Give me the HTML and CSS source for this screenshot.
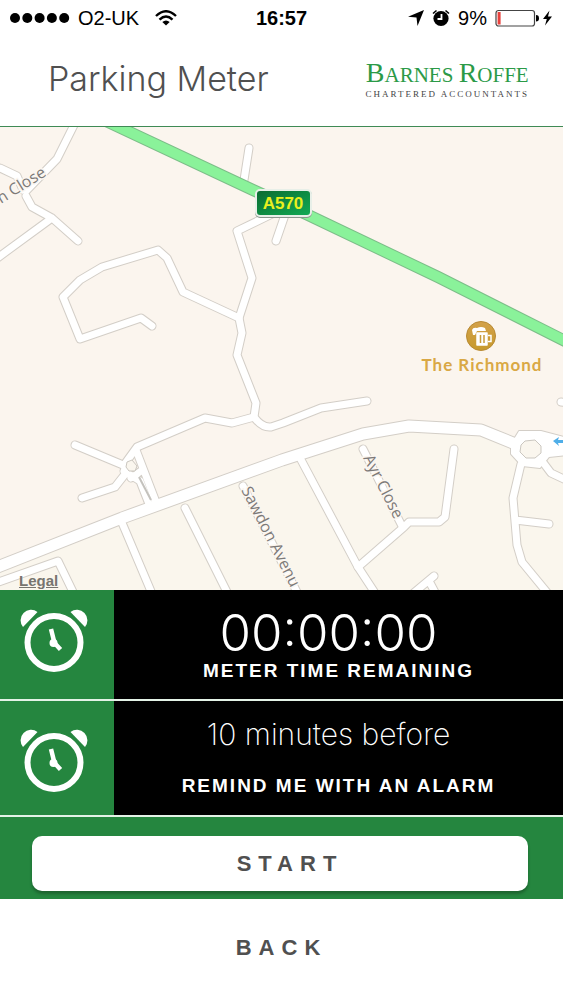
FILE: index.html
```html
<!DOCTYPE html>
<html lang="en">
<head>
    <meta charset="UTF-8">
    <meta name="viewport" content="width=device-width, initial-scale=1.0">
    <title>Parking Meter</title>
    <link rel="stylesheet" href="styles.css">
</head>
<body>

    <div class="status-bar">
        <div class="status-left">
            <svg class="signal" width="60" height="12" viewBox="0 0 60 12">
                <circle cx="5" cy="6" r="5"/>
                <circle cx="17.3" cy="6" r="5"/>
                <circle cx="29.6" cy="6" r="5"/>
                <circle cx="41.9" cy="6" r="5"/>
                <circle cx="54.2" cy="6" r="5"/>
            </svg>
            <span>O2-UK</span>
            <svg class="wifi" width="22" height="16" viewBox="0 0 22 16">
                <path d="M1 6 Q11 -3.5 21 6" fill="none" stroke="#000" stroke-width="2.4"/>
                <path d="M4.5 9.6 Q11 3.4 17.5 9.6" fill="none" stroke="#000" stroke-width="2.4"/>
                <path d="M7.3 12 Q11 8.8 14.7 12 L11 15.6 Z"/>
            </svg>
        </div>
        <strong class="clock">16:57</strong>
        <div class="status-right">
            <svg width="16" height="16" viewBox="0 0 16 16">
                <path d="M16 0 L9.5 16 L8.5 7.5 L0 6.8 Z"/>
            </svg>
            <svg width="18" height="18" viewBox="0 0 18 18">
                <circle cx="9" cy="9.5" r="7.6"/>
                <path d="M1 4.5 L4.5 1.5 M17 4.5 L13.5 1.5" stroke="#000" stroke-width="1.6"/>
                <path d="M9.5 5 V10 H5.5" fill="none" stroke="#fff" stroke-width="1.8"/>
            </svg>
            <span>9%</span>
            <svg width="58" height="18" viewBox="0 0 58 18">
                <rect x="1" y="1.5" width="38.5" height="15.5" rx="2.5" fill="#fff" stroke="#444" stroke-width="1.2"/>
                <rect x="2.6" y="3" width="3" height="12.5" fill="#e8413c"/>
                <path d="M41 6 Q44 6 44 9.2 Q44 12.4 41 12.4 Z"/>
                <path d="M54.5 1.5 L48 10 L51.8 10 L50 16.5 L57 7.6 L53 7.6 Z"/>
            </svg>
        </div>
    </div>

    <header class="header">
        <h1>Parking Meter</h1>
        <div class="brand">
            <div class="brand-name"><span>B</span>ARNES <span>R</span>OFFE</div>
            <div class="brand-sub">CHARTERED ACCOUNTANTS</div>
        </div>
    </header>

    <div class="map">
        <svg class="map-canvas" viewBox="0 127 563 463">
            <defs>
                <linearGradient id="shield" x1="0" y1="0" x2="1" y2="1">
                    <stop offset="0" stop-color="#0a6a30"/>
                    <stop offset="1" stop-color="#12ab55"/>
                </linearGradient>
                <linearGradient id="pub" x1="0" y1="0" x2="0" y2="1">
                    <stop offset="0" stop-color="#d3a14a"/>
                    <stop offset="1" stop-color="#c79a2c"/>
                </linearGradient>
                <!-- side streets, drawn twice: outline first, then the white fill -->
                <g id="streets">
                    <path d="M74 125 L57 159 L26 191 M0 168 L17 176 L23 190"/>
                    <path d="M26 196 L32 207 L52 218 L78 241 M52 218 L-4 259"/>
                    <path d="M152 326 L141 318 L80 339 L63 297 L80 280 L102 267 L158 250 L167 258 L183 292 L239 318"/>
                    <path d="M272 214 L237 231 L252 278 L239 318 L242 333 L237 355 L256 403 L254 417 Q262 428 271 427 L283 423 L321 408 L367 401"/>
                    <path d="M249 148 L244 180 M286 212 L276 241"/>
                    <path d="M254 417 L232 423 L205 418 L137 447 L124 465 L126 473 L115 487 L82 498"/>
                    <path d="M75 445 L123 465 M124 471 L140 481 L149 504 M136 450 L156 502 M131 478 L141 471"/>
                    <path d="M-4 583 L58 561 L75 596"/>
                    <path d="M120 518 L153 596 M185 508 L230 598 M243 486 L300 598"/>
                    <path d="M299 456 L358 567 L377 596"/>
                    <path d="M358 567 L404 527 L409 522 L439 522 L445 517 L454 449"/>
                    <path d="M363 449 L402 526"/>
                    <path d="M434 576 L410 596 M429 581 L436 594"/>
                    <path d="M521 464 L513 498 L517 545 L522 562 L550 596 M515 520 L549 524"/>
                    <path d="M542 461 L551 473 L568 481 M570 403 L561 402"/>
                </g>
                <g id="main-road">
                    <path d="M-5 568 L122 518 L282 460 L363 434 L409 426 L481 430 L518 445"/>
                </g>
                <path id="roundabout" d="M519 431 L541 431 L568 438 L568 455 L549 457 L540 468 L522 466 L511 454 L511 444 Z"/>
            </defs>

            <rect x="0" y="127" width="563" height="463" fill="#fbf5ee"/>
            <path d="M0 590 V565 L282 460 L409 426 L563 440 V590 Z" fill="#faf6ed"/>

            <g class="road-edge">
                <use href="#streets" stroke-width="9"/>
                <use href="#main-road" stroke-width="13"/>
                <use href="#roundabout" stroke-width="2"/>
            </g>
            <g class="road-fill">
                <use href="#streets" stroke-width="7"/>
                <use href="#main-road" stroke-width="11"/>
            </g>
            <use href="#roundabout" fill="#fff"/>
            <path class="island" d="M525 441 L535 440 L541 446 L541 453 L535 458 L526 458 L520 452 L521 445 Z"/>
            <path class="island" d="M127 462 L132 460 L137 466 L135 471 L129 471 L126 467 Z"/>
            <path d="M139 477 L151 500" stroke="#c4c2bd" stroke-width="2"/>
            <path d="M553 441 L559 437 L558 440 L563 440 L563 443 L558 443 L559 446 Z" fill="#4faee8"/>

            <path d="M106 121 L253 190 L306 214 L438 277 L575 346" class="trunk-edge"/>
            <path d="M106 121 L253 190 L306 214 L438 277 L575 346" class="trunk"/>

            <g>
                <rect x="255" y="190" width="57" height="28" rx="5" fill="#8b958d"/>
                <rect x="256" y="190" width="55" height="26" rx="4" fill="url(#shield)" stroke="#e8efe8" stroke-width="2"/>
                <text class="shield-text" x="283" y="209">A570</text>
            </g>

            <g>
                <circle cx="481" cy="336" r="14.5" fill="url(#pub)" stroke="#b88a34"/>
                <path d="M472 330 Q473 327 477 328 Q481 326 485 328 L486 331 H477 L475 335 H473 Z" fill="#fff"/>
                <path d="M477 333 H487 V345 H477 Z" fill="#fff" stroke="#fff" stroke-width="1.5" stroke-linejoin="round"/>
                <path d="M488 335.5 H491 V341.5 H488" fill="none" stroke="#fff" stroke-width="1.5"/>
                <path d="M480.5 335 V343 M484 335 V343" stroke="#c99c3a" stroke-width="1.5"/>
                <text class="place" x="482" y="371">The Richmond</text>
            </g>

            <text class="street-name" transform="translate(1 204) rotate(-32)">n Close</text>
            <text class="street-name" transform="translate(241 490) rotate(63)">Sawdon Avenu</text>
            <text class="street-name" transform="translate(363 458) rotate(63)">Ayr Close</text>
        </svg>
        <a class="legal" href="#">Legal</a>
    </div>

    <svg class="symbols" width="0" height="0">
        <symbol id="alarm" viewBox="0 0 68 64">
            <circle cx="34" cy="33.5" r="26.5" fill="none" stroke="#fff" stroke-width="6"/>
            <path d="M3 18 A10.5 10.5 0 0 1 17.500 3 Z" fill="#fff"/>
            <path d="M65 18 A10.5 10.5 0 0 0 50.500 3 Z" fill="#fff"/>
            <path d="M31 20 L34.5 34 L40.5 40.5" fill="none" stroke="#fff" stroke-width="4.5"/>
            <circle cx="33.5" cy="34" r="4" fill="#fff"/>
        </symbol>
    </svg>

    <main>
        <section class="row">
            <div class="row-icon">
                <svg width="68" height="64"><use href="#alarm"/></svg>
            </div>
            <div class="row-body">
                <div class="timer" id="timer">00:00:00</div>
                <div class="caption">METER TIME REMAINING</div>
            </div>
        </section>

        <section class="row row-reminder">
            <div class="row-icon">
                <svg width="68" height="64"><use href="#alarm"/></svg>
            </div>
            <div class="row-body">
                <select class="reminder" id="reminder">
                    <option>5 minutes before</option>
                    <option selected>10 minutes before</option>
                    <option>15 minutes before</option>
                </select>
                <label class="caption" for="reminder">REMIND ME WITH AN ALARM</label>
            </div>
        </section>

        <div class="start-bar">
            <button class="start" type="button">START</button>
        </div>
        <button class="back" type="button">BACK</button>
    </main>

</body>
</html>
```
FILE: styles.css
```css
* {
    box-sizing: border-box;
}

body {
    margin: 0;
    background: #fff;
    font-family: "Liberation Sans", Arial, sans-serif;
}

/* Status bar */
.status-bar {
    display: grid;
    grid-template-columns: 1fr auto 1fr;
    align-items: center;
    height: 36px;
    padding: 0 10px;
    font-size: 20px;
    color: #000;
}

.status-left,
.status-right {
    display: flex;
    align-items: center;
    gap: 8px;
}

.status-right {
    justify-content: flex-end;
}

.wifi {
    margin-left: 8px;
}

/* Header */
.header {
    display: flex;
    justify-content: space-between;
    align-items: center;
    height: 91px;
    padding: 0 34px 4px 48px;
    border-bottom: 1px solid #3f8a55;
}

.header h1 {
    margin: 0;
    font-family: Inter, "Liberation Sans", sans-serif;
    font-size: 34px;
    font-weight: 300;
    line-height: 40px;
    color: #505050;
}

.brand {
    text-align: center;
    font-family: "Liberation Serif", serif;
}

.brand-name {
    font-size: 21px;
    line-height: 28px;
    color: #2b9a47;
}

.brand-name span {
    font-size: 28px;
}

.brand-sub {
    font-size: 9px;
    line-height: 10px;
    letter-spacing: 2px;
    color: #444;
}

/* Map */
.map {
    position: relative;
}

.map-canvas {
    display: block;
    width: 100%;
    height: auto;
}

.road-edge,
.road-fill {
    fill: none;
    stroke-linecap: round;
    stroke-linejoin: round;
}

.road-edge {
    stroke: #d3cec7;
}

.road-fill {
    stroke: #fff;
}

.island {
    fill: #faf6ee;
    stroke: #cbc7c0;
}

.trunk,
.trunk-edge {
    fill: none;
    stroke: #8af29a;
    stroke-width: 10;
}

.trunk-edge {
    stroke: #7cbd88;
    stroke-width: 12;
}

.shield-text {
    font-size: 17px;
    font-weight: bold;
    fill: #e9f01e;
    text-anchor: middle;
}

.place {
    font-family: Lato, sans-serif;
    font-size: 17px;
    font-weight: bold;
    letter-spacing: 1px;
    fill: #d9a845;
    text-anchor: middle;
}

.street-name {
    font-family: "Open Sans", sans-serif;
    font-size: 16px;
    font-weight: 500;
    fill: #7d7a78;
    stroke: #fbf6f0;
    stroke-width: 3px;
    paint-order: stroke;
}

.legal {
    position: absolute;
    left: 19px;
    bottom: 1px;
    font-size: 15px;
    line-height: 17px;
    font-weight: bold;
    color: #77746f;
}

.symbols {
    position: absolute;
}

/* Meter rows */
.row {
    display: flex;
    min-height: 111px;
    border-bottom: 2px solid #e4f3e7;
    background: #000;
    color: #fff;
}

.row-reminder {
    min-height: 116px;
}

.row-icon {
    flex: 0 0 114px;
    display: flex;
    align-items: center;
    justify-content: center;
    padding: 0 7px 8px 0;
    background: #25863f;
}

.row-reminder .row-icon {
    padding: 6px 7px 0 0;
}

.row-body {
    flex: 1;
    display: flex;
    flex-direction: column;
    align-items: center;
    justify-content: center;
}

.row-reminder .row-body {
    padding-bottom: 3px;
}

.timer {
    padding-right: 20px;
    font-family: Inter, "Liberation Sans", sans-serif;
    font-size: 51px;
    font-weight: 300;
    line-height: 52px;
}

.caption {
    font-size: 19px;
    font-weight: bold;
    line-height: 24px;
    letter-spacing: 2px;
}

.reminder {
    width: 100%;
    margin-bottom: 22px;
    padding: 0 20px 0 0;
    border: none;
    appearance: none;
    background: transparent;
    color: #fff;
    font-family: Inter, "Liberation Sans", sans-serif;
    font-size: 30px;
    font-weight: 200;
    line-height: 36px;
    text-align: center;
    text-align-last: center;
}

/* Buttons */
.start-bar {
    padding: 19px 35px 8px 32px;
    background: #25863f;
}

.start,
.back {
    display: block;
    width: 100%;
    border: none;
    background: #fff;
    color: #505050;
    font-family: inherit;
    font-size: 22px;
    font-weight: bold;
    letter-spacing: 7px;
    cursor: pointer;
}

.start {
    height: 55px;
    padding: 0 0 0 20px;
    border-radius: 10px;
    box-shadow: 0 3px 3px rgba(0,0,0,0.25);
}

.back {
    height: 98px;
}
```
